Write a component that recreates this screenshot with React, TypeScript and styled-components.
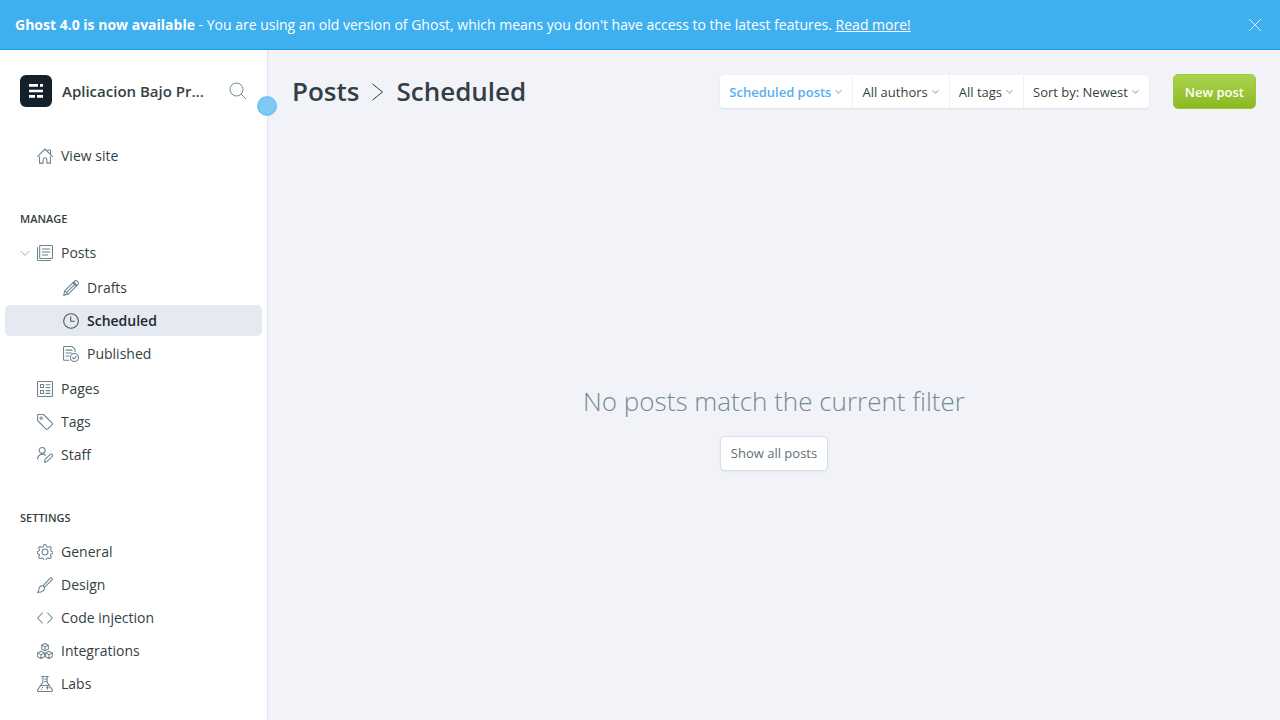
import React from "react";
import styled, { createGlobalStyle, css } from "styled-components";

const GlobalStyle = createGlobalStyle`
  *, *::before, *::after { box-sizing: border-box; }
  body {
    margin: 0;
    background: #f2f3f8;
    color: #343f44;
    font-family: "Open Sans", "Noto Sans", sans-serif;
    font-size: 14px;
    line-height: 20px;
  }
  button, select { font: inherit; color: inherit; }
  button { cursor: pointer; }
  svg { display: block; flex: none; }
`;

const Page = styled.div`
  display: flex;
  flex-direction: column;
  min-height: 100vh;
`;

const Banner = styled.aside`
  display: flex;
  align-items: center;
  justify-content: space-between;
  min-height: 50px;
  padding: 0 15px;
  background: #3eb0ef;
  border-bottom: 1px solid #1f9be2;
  color: #fff;

  p { margin: 0; }
  a { color: inherit; }
`;

const IconButton = styled.button`
  display: flex;
  padding: 4px;
  margin-right: -1px;
  border: 0;
  background: none;
  color: inherit;
`;

const Body = styled.div`
  display: flex;
  flex: 1;
`;

const Sidebar = styled.nav`
  position: relative;
  flex: 0 0 268px;
  min-width: 0;
  padding: 25px 5px 20px;
  background: #fff;
  border-right: 1px solid #dfe3eb;
`;

const SidebarToggle = styled.button`
  position: absolute;
  top: 46px;
  right: -10px;
  width: 20px;
  height: 20px;
  padding: 0;
  border: 2px solid #72c3f2;
  border-radius: 50%;
  background: #7fcaf4;
`;

const SiteHeader = styled.header`
  display: flex;
  align-items: center;
  height: 32px;
  margin: 0 12px 32px 15px;
`;

const SiteName = styled.div`
  flex: 1;
  min-width: 0;
  margin: 0 8px 0 10px;
  overflow: hidden;
  white-space: nowrap;
  text-overflow: ellipsis;
  font-size: 15px;
  font-weight: 600;
`;

const NavTitle = styled.h2`
  margin: 39px 15px 9px;
  font-size: 11px;
  font-weight: 600;
  line-height: 16px;
  text-transform: uppercase;
`;

const NavList = styled.ul<{ $nested?: boolean }>`
  margin: ${(p) => (p.$nested ? "2px 0" : "0")};
  padding: 0;
  list-style: none;
`;

const NavItem = styled.li`
  padding: 1px 0;
  position: relative;
`;

const NavLink = styled.a<{ $nested?: boolean; $active?: boolean }>`
  display: flex;
  align-items: center;
  gap: 8px;
  height: 31px;
  padding-left: ${(p) => (p.$nested ? 58 : 32)}px;
  border-radius: 5px;
  color: #343f44;
  text-decoration: none;

  svg { color: #6c848f; }

  ${(p) =>
    p.$active &&
    css`
      background: #e5eaf2;
      color: #20292e;
      font-weight: 600;
      svg { color: #4a5560; }
    `}
`;

const Disclosure = styled.button`
  position: absolute;
  top: 7px;
  left: 10px;
  display: flex;
  padding: 5px;
  border: 0;
  background: none;
  color: #a0adb5;
`;

const Main = styled.main`
  display: flex;
  flex: 1;
  flex-direction: column;
  min-width: 0;
  padding: 24px 24px 0;
`;

const PageHeader = styled.header`
  display: flex;
  align-items: center;
  gap: 24px;
`;

const PageTitle = styled.h1`
  display: flex;
  flex: 1;
  align-items: center;
  gap: 12px;
  margin: 0;
  font-size: 26px;
  font-weight: 600;
  line-height: 35px;
  white-space: nowrap;

  a { color: inherit; text-decoration: none; }
`;

const Filters = styled.div`
  display: flex;
  border-radius: 4px;
  background: #fff;
  box-shadow: 0 1px 2px rgba(60, 80, 110, 0.12);
`;

const FilterLabel = styled.label<{ $active?: boolean }>`
  display: grid;
  align-items: center;
  height: 33px;
  color: ${(p) => (p.$active ? "#55b0f0" : "#343f44")};
  font-size: 13px;
  font-weight: ${(p) => (p.$active ? 600 : 400)};

  & + & { border-left: 1px solid #edeff4; }

  > * { grid-area: 1 / 1; }

  svg {
    justify-self: end;
    margin-right: 10px;
    color: #b0bac3;
    pointer-events: none;
  }
`;

const Select = styled.select`
  height: 33px;
  padding: 0 21px 0 9px;
  border: 0;
  background: none;
  appearance: none;
  field-sizing: content;
`;

const PrimaryButton = styled.button`
  height: 35px;
  padding: 0 11px;
  border: 1px solid #9fc83a;
  border-radius: 5px;
  background: linear-gradient(#acd450, #8cb820);
  color: #fff;
  font-size: 13px;
  font-weight: 600;
`;

const EmptyState = styled.section`
  display: flex;
  flex: 1;
  flex-direction: column;
  align-items: center;
  justify-content: center;
  padding-top: 24px;

  h2 {
    margin: 0 0 17px;
    color: #738a94;
    font-size: 26px;
    font-weight: 300;
    line-height: 36px;
  }
`;

const PlainLinkButton = styled.a`
  display: flex;
  align-items: center;
  height: 35px;
  padding: 0 10px;
  border: 1px solid #d5e0e8;
  border-radius: 5px;
  background: #fff;
  box-shadow: 0 1px 2px rgba(60, 80, 110, 0.08);
  color: #607078;
  font-size: 13px;
  text-decoration: none;
`;

const Icon = ({ children }: { children: React.ReactNode }) => (
  <svg
    width="16"
    height="16"
    viewBox="0 0 24 24"
    fill="none"
    stroke="currentColor"
    strokeWidth="1.6"
    strokeLinecap="round"
    strokeLinejoin="round"
    aria-hidden="true"
  >
    {children}
  </svg>
);

const Chevron = ({ width, weight }: { width: number; weight: number }) => (
  <svg width={width} height={width} viewBox="0 0 10 10" fill="none" stroke="currentColor" strokeWidth={weight} aria-hidden="true">
    <path d="M.7 3 5 7.4 9.3 3" />
  </svg>
);

const cube = (x: number, y: number) =>
  `M${x} ${y - 5.4}l5 2.4v6L${x} ${y + 5.4}l-5-2.4v-6zM${x - 5} ${y - 3}L${x} ${y - 0.4}l5-2.6M${x} ${y - 0.4}V${y + 5.4}`;

const icons = {
  home: (
    <path d="M.8 12.8 12 1.5l11.2 11.3M3.8 13v9.7h5.4v-5.4a2.8 2.8 0 0 1 5.6 0v5.4h5.4V13M16 3h4.3v5.3" />
  ),
  posts: (
    <>
      <rect x="4" y=".8" width="19.2" height="19.4" rx="1" />
      <path d="M.8 3.8v18a1.4 1.4 0 0 0 1.4 1.4h18M8 6h11.2M8 10.5h11.2M8 15h8" />
    </>
  ),
  draft: (
    <path d="M1 23l1.6-6.6L17.2 1.8a2.9 2.9 0 0 1 4.2 0l.8.8a2.9 2.9 0 0 1 0 4.2L7.6 21.4zM2.6 16.4l5 5M14.8 4.2l5 5M17.2 6.8 5.6 18.4M16 3l5 5M1.2 21l1.8 1.8" />
  ),
  clock: (
    <>
      <circle cx="12" cy="12" r="11" />
      <path d="M11.5 5.5v7h5.3" />
    </>
  ),
  published: (
    <>
      <path d="M9 21.5H2.2A1.4 1.4 0 0 1 .8 20V2.2A1.4 1.4 0 0 1 2.2.8h11.6L18 5v3.6M4.5 6.2h9M4.5 10.6h8M4.5 15h4.6" />
      <circle cx="17.2" cy="17.2" r="6" />
      <path d="m14.4 17.4 2 2 3.6-4.2" />
    </>
  ),
  pages: (
    <>
      <rect x=".8" y=".8" width="22.4" height="22.4" rx="1" />
      <path d="M5.2 5.2h4.6v4.6H5.2zM5.2 14.2h4.6v4.6H5.2zM13.5 5.6h6M13.5 9.8h6M13.5 14.4h6M13.5 18.6h6" />
    </>
  ),
  tag: (
    <>
      <path d="M.8 2.2v6.6a2.4 2.4 0 0 0 .7 1.7l12.2 12.2a1.6 1.6 0 0 0 2.2 0l6.8-6.8a1.6 1.6 0 0 0 0-2.2L10.5 1.5A2.4 2.4 0 0 0 8.8.8H2.2A1.4 1.4 0 0 0 .8 2.2z" />
      <circle cx="6.2" cy="6.2" r="1.7" />
    </>
  ),
  staff: (
    <>
      <circle cx="7.8" cy="5.2" r="4.4" />
      <path d="M.8 17.8a7.2 7.2 0 0 1 11.7-5.4M11.2 23l1-4.4 7.3-7.3a2.1 2.1 0 0 1 3 3l-7.3 7.4z" />
    </>
  ),
  gear: (
    <>
      <circle cx="12" cy="12" r="4.4" />
      <path d="M10.1 2.3c.7-2 3.1-2 3.8 0l.5 1.3a2 2 0 0 0 2.7 1.1l1.1-.5c2-.8 3.7.9 2.8 2.8l-.5 1.1a2 2 0 0 0 1 2.6l.9.4c1.900.8 1.900 2.900 0 3.600l-.9.4a2 2 0 0 0-1 2.600l.5 1.1c.9 2-.8 3.700-2.800 2.800l-1.100-.5a2 2 0 0 0-2.700 1.100l-.5 1.300c-.7 2-3.100 2-3.800 0l-.5-1.300a2 2 0 0 0-2.700-1.100l-1.100.5c-2 .9-3.700-.8-2.800-2.800l.5-1.100a2 2 0 0 0-1-2.600l-.9-.4c-1.900-.7-1.900-2.800 0-3.600l.9-.4a2 2 0 0 0 1-2.600L3 7c-.9-1.900.8-3.600 2.800-2.800l1.100.5a2 2 0 0 0 2.700-1.100z" />
    </>
  ),
  brush: (
    <path d="M8.8 13.2 19.8 1.6a2 2 0 0 1 2.8 2.8L11 15.6M8.6 13.2l2.5 2.5c.8 3-1.4 7.4-10.3 7.4 1.8-1.3 1.7-2.8 2.1-5.1.5-2.8 2.8-5.2 5.7-4.8z" />
  ),
  code: <path d="M8 4.5.9 12 8 19.5M16 4.5l7.1 7.5-7.1 7.5" />,
  cubes: <path d={cube(12, 6.2) + cube(6, 17.8) + cube(18, 17.8)} />,
  flask: (
    <path d="M7 .8h10M8.8.8v8.7L1.2 20.4c-.9 1.4-.1 2.8 1.5 2.8h18.600c1.600 0 2.400-1.400 1.500-2.800L15.200 9.500V.8M11.500 4.500h3.500M11.500 8.200h3.500M5.600 14.200h12.800M15.800 15.600v4M13.800 17.600h4M8.200 17v.4M6.600 19.800H7" />
  ),
};

type Entry = {
  label: string;
  icon: keyof typeof icons;
  active?: boolean;
  children?: Entry[];
};

const manage: Entry[] = [
  {
    label: "Posts",
    icon: "posts",
    children: [
      { label: "Drafts", icon: "draft" },
      { label: "Scheduled", icon: "clock", active: true },
      { label: "Published", icon: "published" },
    ],
  },
  { label: "Pages", icon: "pages" },
  { label: "Tags", icon: "tag" },
  { label: "Staff", icon: "staff" },
];

const settings: Entry[] = [
  { label: "General", icon: "gear" },
  { label: "Design", icon: "brush" },
  { label: "Code injection", icon: "code" },
  { label: "Integrations", icon: "cubes" },
  { label: "Labs", icon: "flask" },
];

const Menu = ({ entries, nested }: { entries: Entry[]; nested?: boolean }) => (
  <NavList $nested={nested}>
    {entries.map((e) => (
      <React.Fragment key={e.label}>
        <NavItem>
          <NavLink href="#" $nested={nested} $active={e.active} aria-current={e.active ? "page" : undefined}>
            <Icon>{icons[e.icon]}</Icon>
            {e.label}
          </NavLink>
          {e.children && (
            <Disclosure aria-label="Collapse posts" aria-expanded="true">
              <Chevron width={10} weight={1} />
            </Disclosure>
          )}
        </NavItem>
        {e.children && (
          <li>
            <Menu entries={e.children} nested />
          </li>
        )}
      </React.Fragment>
    ))}
  </NavList>
);

const filters = [
  { name: "Post type", value: "Scheduled posts", active: true },
  { name: "Author", value: "All authors" },
  { name: "Tag", value: "All tags" },
  { name: "Order", value: "Sort by: Newest" },
];

export default function App() {
  return (
    <Page>
      <GlobalStyle />
      <Banner>
        <p>
          <strong>Ghost 4.0 is now available</strong> - You are using an old version of Ghost, which means you don't
          have access to the latest features. <a href="#">Read more!</a>
        </p>
        <IconButton aria-label="Close">
          <svg width="14" height="14" viewBox="0 0 14 14" stroke="currentColor" strokeWidth=".8" aria-hidden="true">
            <path d="m1 1 12 12M13 1 1 13" />
          </svg>
        </IconButton>
      </Banner>
      <Body>
        <Sidebar>
          <SiteHeader>
            <svg width="32" height="32" viewBox="0 0 32 32" aria-hidden="true">
              <rect width="32" height="32" rx="6" fill="#15212a" />
              <path d="M9 9h9v2.700H9zM20 9h3v2.700h-3zM9 14.700h14v2.600H9zM9 20h6v2.700H9zM17 20h6v2.700h-6z" fill="#fff" />
            </svg>
            <SiteName>Aplicacion Bajo Pr...</SiteName>
            <IconButton aria-label="Search">
              <svg width="18" height="18" viewBox="0 0 18 18" fill="none" stroke="#738a94" aria-hidden="true">
                <circle cx="7.5" cy="7.5" r="6.5" />
                <path d="m12.3 12.3 4.7 4.7" />
              </svg>
            </IconButton>
          </SiteHeader>
          <Menu entries={[{ label: "View site", icon: "home" }]} />
          <NavTitle>Manage</NavTitle>
          <Menu entries={manage} />
          <NavTitle>Settings</NavTitle>
          <Menu entries={settings} />
          <SidebarToggle aria-label="Toggle sidebar" />
        </Sidebar>
        <Main>
          <PageHeader>
            <PageTitle>
              <a href="#">Posts</a>
              <svg width="13" height="18" viewBox="0 0 13 18" fill="none" stroke="currentColor" aria-hidden="true">
                <path d="M1.5 1 11.5 9l-10 8" />
              </svg>
              Scheduled
            </PageTitle>
            <Filters>
              {filters.map((f) => (
                <FilterLabel key={f.name} $active={f.active}>
                  <Select aria-label={f.name}>
                    <option>{f.value}</option>
                  </Select>
                  <Chevron width={7} weight={1.5} />
                </FilterLabel>
              ))}
            </Filters>
            <PrimaryButton>New post</PrimaryButton>
          </PageHeader>
          <EmptyState>
            <h2>No posts match the current filter</h2>
            <PlainLinkButton href="#">Show all posts</PlainLinkButton>
          </EmptyState>
        </Main>
      </Body>
    </Page>
  );
}
